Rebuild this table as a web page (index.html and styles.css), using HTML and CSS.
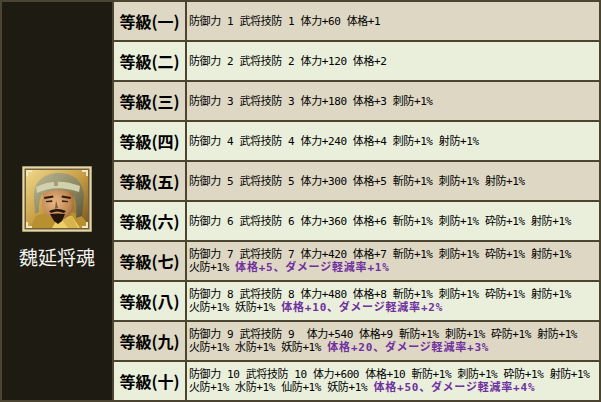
FILE: index.html
```html
<!DOCTYPE html>
<html lang="ja">
<head>
<meta charset="utf-8">
<title>魏延将魂</title>
<link rel="stylesheet" href="styles.css">
</head>
<body>
<div class="sheet">
  <div class="hero">
    <svg class="portrait" width="70" height="66" viewBox="0 0 70 66" xmlns="http://www.w3.org/2000/svg">
      <defs>
        <linearGradient id="bg" x1="0" y1="0" x2="1" y2="1">
          <stop offset="0" stop-color="#f0d98a"/>
          <stop offset="0.5" stop-color="#c79d45"/>
          <stop offset="1" stop-color="#7a5520"/>
        </linearGradient>
        <linearGradient id="helm" x1="0" y1="0" x2="1" y2="1">
          <stop offset="0" stop-color="#bdb996"/>
          <stop offset="0.6" stop-color="#88845e"/>
          <stop offset="1" stop-color="#55523a"/>
        </linearGradient>
        <radialGradient id="face" cx="0.4" cy="0.4" r="0.7">
          <stop offset="0" stop-color="#e8b887"/>
          <stop offset="0.7" stop-color="#bf8651"/>
          <stop offset="1" stop-color="#8a5a2e"/>
        </radialGradient>
      </defs>
      <rect x="0" y="0" width="70" height="66" fill="#6e6040"/>
      <rect x="1.5" y="1.5" width="67" height="63" fill="none" stroke="#e6d7a6" stroke-width="2"/>
      <rect x="4" y="4" width="62" height="58" fill="url(#bg)"/>
      <path d="M8 62 L14 50 Q34 42 58 48 L66 58 L66 62 Z" fill="#b8902f"/>
      <path d="M30 62 L36 52 L50 50 L58 62 Z" fill="#ecd06a"/>
      <path d="M40 54 L50 50 L56 62 L46 62 Z" fill="#d9b44c"/>
      <path d="M12 34 Q10 10 34 7 Q60 6 62 30 L60 50 L54 52 Q56 36 50 27 L22 26 Q16 32 17 46 L13 48 Z" fill="url(#helm)"/>
      <path d="M14 21 Q34 11 58 20 L57 26 Q34 18 15 27 Z" fill="#d3d0ad"/>
      <path d="M32 8 L36 8 L36 20 L32 20 Z" fill="#a3a080"/>
      <path d="M21 27 Q36 21 51 27 L52 40 Q50 52 36 55 Q23 52 20 40 Z" fill="url(#face)"/>
      <path d="M22 31 L31 29.5 L31.5 31.5 L22.5 33 Z M40 29.5 L49 31 L48.5 33 L39.5 31.5 Z" fill="#2a180c"/>
      <path d="M24 35 L30 34.3 L30.5 36 L24 36.2 Z M40 34.3 L46 35 L46 36.2 L40 36 Z" fill="#3a2212"/>
      <path d="M34 34 L36 42 L33 43 Z" fill="#8a5a2e"/>
      <path d="M27 45 Q35 41 44 45 L42 47 Q35 44 29 47 Z" fill="#24150b"/>
      <path d="M28 48 Q36 47 43 48 L40 55 L36 58 L32 55 Z" fill="#24150b"/>
      <path d="M4 4 H10 V6 H6 V10 H4 Z M66 4 H60 V6 H64 V10 H66 Z M4 62 H10 V60 H6 V56 H4 Z M66 62 H60 V60 H64 V56 H66 Z" fill="#f2e6bd"/>
    </svg>
    <div class="name">魏延将魂</div>
  </div>

  <div class="lv odd">等級(一)</div>
  <div class="desc odd"><span>防御力 1 武将技防 1 体力+60 体格+1</span></div>

  <div class="lv even">等級(二)</div>
  <div class="desc even"><span>防御力 2 武将技防 2 体力+120 体格+2</span></div>

  <div class="lv odd">等級(三)</div>
  <div class="desc odd"><span>防御力 3 武将技防 3 体力+180 体格+3 刺防+1%</span></div>

  <div class="lv even">等級(四)</div>
  <div class="desc even"><span>防御力 4 武将技防 4 体力+240 体格+4 刺防+1% 射防+1%</span></div>

  <div class="lv odd">等級(五)</div>
  <div class="desc odd"><span>防御力 5 武将技防 5 体力+300 体格+5 斬防+1% 刺防+1% 射防+1%</span></div>

  <div class="lv even">等級(六)</div>
  <div class="desc even"><span>防御力 6 武将技防 6 体力+360 体格+6 斬防+1% 刺防+1% 砕防+1% 射防+1%</span></div>

  <div class="lv odd">等級(七)</div>
  <div class="desc odd"><span>防御力 7 武将技防 7 体力+420 体格+7 斬防+1% 刺防+1% 砕防+1% 射防+1%</span><span>火防+1% <b class="bonus">体格+5、ダメージ軽減率+1%</b></span></div>

  <div class="lv even">等級(八)</div>
  <div class="desc even"><span>防御力 8 武将技防 8 体力+480 体格+8 斬防+1% 刺防+1% 砕防+1% 射防+1%</span><span>火防+1% 妖防+1% <b class="bonus">体格+10、ダメージ軽減率+2%</b></span></div>

  <div class="lv odd">等級(九)</div>
  <div class="desc odd"><span>防御力 9 武将技防 9  体力+540 体格+9 斬防+1% 刺防+1% 砕防+1% 射防+1%</span><span>火防+1% 水防+1% 妖防+1% <b class="bonus">体格+20、ダメージ軽減率+3%</b></span></div>

  <div class="lv even">等級(十)</div>
  <div class="desc even"><span>防御力 10 武将技防 10 体力+600 体格+10 斬防+1% 刺防+1% 砕防+1% 射防+1%</span><span>火防+1% 水防+1% 仙防+1% 妖防+1% <b class="bonus">体格+50、ダメージ軽減率+4%</b></span></div>
</div>
</body>
</html>
```

FILE: styles.css
```css
html, body {
  margin: 0;
  padding: 0;
  background: #4a4430;
}

.sheet {
  box-sizing: border-box;
  width: 601px;
  height: 402px;
  padding: 2px;
  display: grid;
  grid-template-columns: 110px 71px 412px;
  grid-template-rows: repeat(10, 38px);
  gap: 2px;
  background: #4a4430;
  font-family: "Noto Sans CJK JP", "Noto Sans", sans-serif;
  color: #000;
}

.hero {
  grid-row: 1 / span 10;
  background: #1e1b13;
  display: flex;
  flex-direction: column;
  align-items: center;
  padding-top: 164px;
  box-sizing: border-box;
}

.portrait {
  display: block;
}

.name {
  margin-top: 14px;
  color: #f4f4f0;
  font-size: 19px;
  line-height: 22px;
}

.odd {
  background: #ddd7c3;
}

.even {
  background: #e9efdb;
}

.lv {
  display: flex;
  align-items: center;
  justify-content: center;
  font-size: 16px;
  font-weight: bold;
}

.desc {
  display: flex;
  flex-direction: column;
  justify-content: center;
  padding-left: 2px;
  font-family: "DejaVu Sans Mono", "Noto Sans CJK JP", monospace;
  font-size: 11px;
  line-height: 13px;
  letter-spacing: -0.4px;
  white-space: pre;
  overflow: hidden;
}

.desc span {
  display: block;
  height: 13px;
}

.bonus {
  color: #7030a0;
  font-weight: bold;
  letter-spacing: 0.8px;
}
```
